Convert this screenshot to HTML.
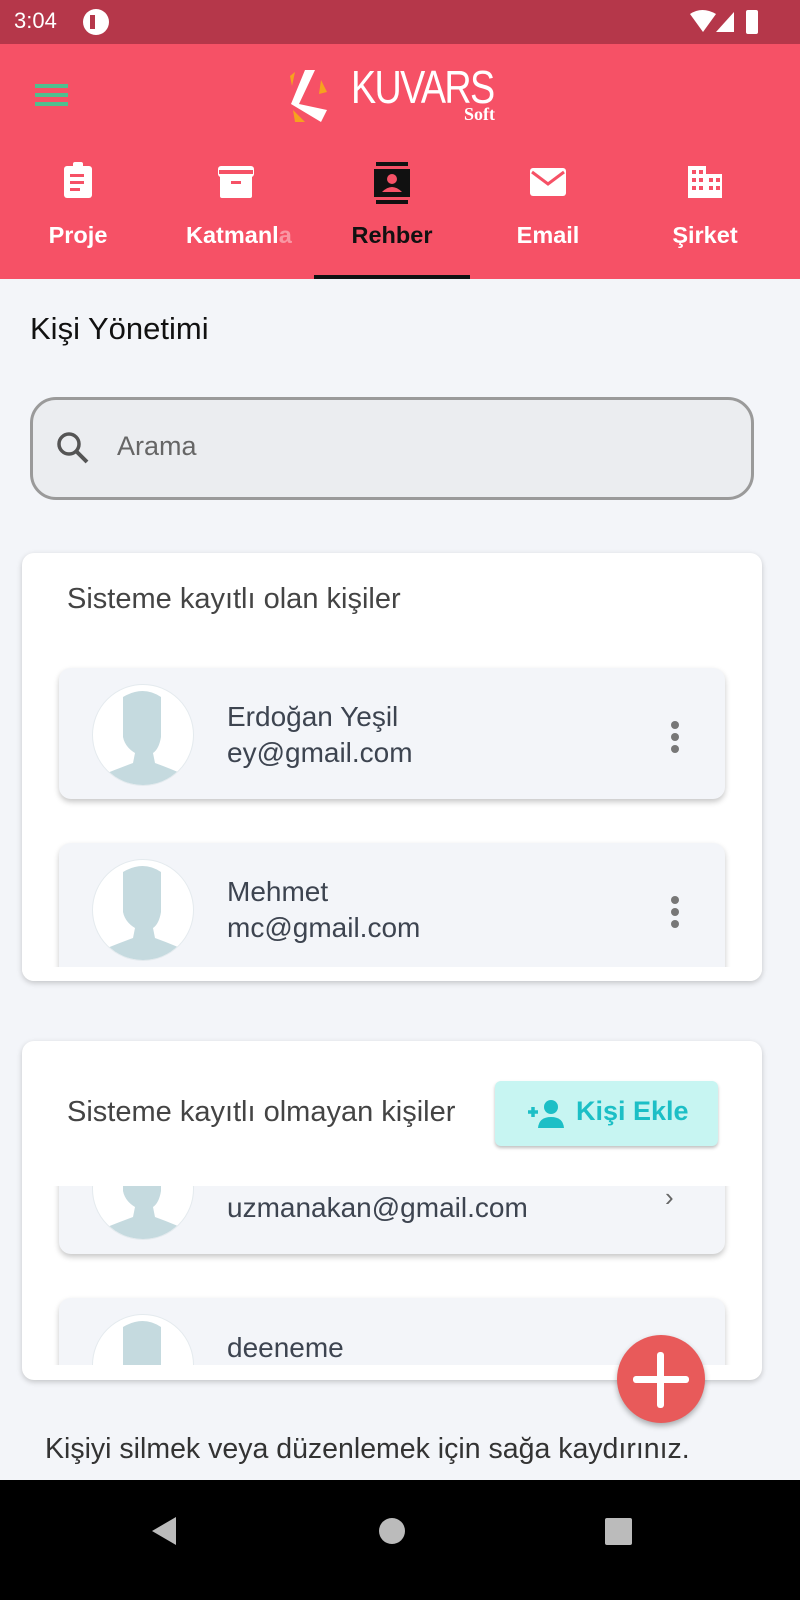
<!DOCTYPE html><html><head><meta charset="utf-8"><style>
*{margin:0;padding:0;box-sizing:border-box}
body{width:800px;height:1600px;background:#f3f5f9;font-family:"Liberation Sans",sans-serif;position:relative;overflow:hidden;color:#333}
.a{position:absolute;white-space:nowrap}
.tab{position:absolute;top:160px;width:156px;text-align:center;color:#fff;font-weight:bold;font-size:23.5px}
.tab svg{display:block;margin:0 auto 22px}
.card{position:absolute;left:22px;width:740px;background:#fff;border-radius:12px;box-shadow:0 2px 6px rgba(0,0,0,.2)}
.item{position:absolute;left:37px;width:666px;background:#f3f5f9;border-radius:12px;box-shadow:0 3px 6px rgba(0,0,0,.22)}
.av{position:absolute;left:33px;width:102px;height:102px;border-radius:50%;background:#fff;overflow:hidden;border:1px solid #e4eaee}
.nm{position:absolute;left:168px;font-size:28px;color:#3d4450;white-space:nowrap}
.dots{position:absolute;left:612px;width:8px}
.dots i{display:block;width:8px;height:8px;border-radius:50%;background:#777;margin-bottom:4px}
</style></head><body>
<div class="a" style="left:0;top:0;width:800px;height:44px;background:#b5374a"></div>
<div class="a" style="left:14px;top:8px;color:#fff;font-size:22px">3:04</div>
<div class="a" style="left:83px;top:9px;width:26px;height:26px;border-radius:50%;background:#fff"></div>
<div class="a" style="left:90px;top:15px;width:5px;height:14px;background:#b5374a"></div>
<svg class="a" style="left:688px;top:8px" width="100" height="28"><path d="M2 6 Q14 -2 28 6 L15 24Z" fill="#fff"/><path d="M46 4 L46 24 L28 24Z" fill="#fff"/><rect x="58" y="2" width="12" height="24" rx="2" fill="#fff"/></svg>
<div class="a" style="left:0;top:44px;width:800px;height:235px;background:#f65166"></div>
<div class="a" style="left:35px;top:84px;width:33px;height:4px;background:#4fbf8f;box-shadow:0 9px 0 #4fbf8f,0 18px 0 #4fbf8f"></div>
<svg class="a" style="left:285px;top:64px" width="60" height="60"><path d="M5 12 L10 8 L7 22Z" fill="#f6a21e"/><path d="M20 6 L30 6 L14 40 L42 46 L36 58 L6 40Z" fill="#fff"/><path d="M8 46 L20 58 L10 58Z" fill="#f6a21e"/><path d="M36 16 L42 28 L34 30Z" fill="#f6a21e"/></svg>
<div class="a" style="left:351px;top:60px;color:#fff;font-size:46px;letter-spacing:-2px;transform:scaleX(.82);transform-origin:left top">KUVARS</div>
<div class="a" style="left:464px;top:104px;color:#fff;font-size:18px;font-weight:bold;font-family:'Liberation Serif',serif">Soft</div>
<div class="tab" style="left:0"><svg width="34" height="40"><rect x="3" y="6" width="28" height="32" rx="3" fill="#fff"/><rect x="12" y="2" width="10" height="7" rx="2" fill="#fff"/><rect x="9" y="14" width="14" height="3" fill="#f65166"/><rect x="9" y="21" width="14" height="3" fill="#f65166"/><rect x="9" y="28" width="10" height="3" fill="#f65166"/></svg>Proje</div>
<div class="tab" style="overflow:hidden;width:130px;left:170px;text-align:left;padding-left:16px"><svg width="40" height="40" style="margin:0 0 22px 30px"><rect x="2" y="6" width="36" height="11" rx="3" fill="#fff"/><rect x="4" y="14" width="32" height="24" rx="2" fill="#fff"/><rect x="3" y="10" width="34" height="4" fill="#f65166"/><rect x="15" y="21" width="10" height="3" fill="#f65166"/></svg>Katmanl<span style="opacity:.4">a</span></div>
<div class="tab" style="left:314px;color:#111"><svg width="40" height="46" style="margin-bottom:16px"><rect x="4" y="2" width="32" height="4" fill="#111"/><rect x="4" y="40" width="32" height="4" fill="#111"/><rect x="2" y="9" width="36" height="28" fill="#111"/><circle cx="20" cy="19" r="5" fill="#f65166"/><path d="M10 32 Q20 22 30 32Z" fill="#f65166"/></svg>Rehber</div>
<div class="tab" style="left:470px"><svg width="40" height="40"><rect x="2" y="8" width="36" height="28" rx="3" fill="#fff"/><path d="M4 12 L20 24 L36 12" stroke="#f65166" stroke-width="3" fill="none"/></svg>Email</div>
<div class="tab" style="left:627px"><svg width="40" height="40"><path d="M3 6 H21 V14 H37 V38 H3Z" fill="#fff"/><g fill="#f65166"><rect x="7" y="10" width="4" height="4"/><rect x="14" y="10" width="4" height="4"/><rect x="7" y="18" width="4" height="4"/><rect x="14" y="18" width="4" height="4"/><rect x="7" y="26" width="4" height="4"/><rect x="14" y="26" width="4" height="4"/><rect x="24" y="18" width="4" height="4"/><rect x="31" y="18" width="4" height="4"/><rect x="24" y="26" width="4" height="4"/><rect x="31" y="26" width="4" height="4"/></g></svg>Şirket</div>
<div class="a" style="left:314px;top:275px;width:156px;height:4px;background:#111"></div>
<div class="a" style="left:30px;top:311px;font-size:31px;color:#111">Kişi Yönetimi</div>
<div class="a" style="left:30px;top:397px;width:724px;height:103px;border:3px solid #9a9a9a;border-radius:26px;background:#ebedf0"></div>
<svg class="a" style="left:55px;top:430px" width="36" height="36"><circle cx="14" cy="14" r="10" stroke="#555" stroke-width="3.5" fill="none"/><path d="M21 21 L32 32" stroke="#555" stroke-width="4"/></svg>
<div class="a" style="left:117px;top:431px;font-size:27px;color:#666">Arama</div>
<div class="card" style="top:553px;height:428px;overflow:hidden">
<div class="a" style="left:45px;top:30px;font-size:29px;color:#444">Sisteme kayıtlı olan kişiler</div>
<div class="item" style="top:115px;height:131px"><div class="av" style="top:16px"><svg width="102" height="102"><path d="M30 12 Q50 0 68 12 L68 52 Q66 64 60 68 L62 78 Q84 86 100 94 L100 102 L0 102 L0 94 Q18 86 40 78 L42 68 Q32 62 30 52Z" fill="#c5dadf"/></svg></div><div class="nm" style="top:33px">Erdoğan Yeşil</div><div class="nm" style="top:69px">ey@gmail.com</div><div class="dots" style="top:53px"><i></i><i></i><i></i></div></div>
<div class="item" style="top:290px;height:140px"><div class="av" style="top:16px"><svg width="102" height="102"><path d="M30 12 Q50 0 68 12 L68 52 Q66 64 60 68 L62 78 Q84 86 100 94 L100 102 L0 102 L0 94 Q18 86 40 78 L42 68 Q32 62 30 52Z" fill="#c5dadf"/></svg></div><div class="nm" style="top:33px">Mehmet</div><div class="nm" style="top:69px">mc@gmail.com</div><div class="dots" style="top:53px"><i></i><i></i><i></i></div></div>
<div class="a" style="left:0;top:414px;width:740px;height:14px;background:#fff"></div>
</div>
<div class="card" style="top:1041px;height:339px;overflow:hidden">
<div class="a" style="left:0;top:145px;width:740px;height:179px;overflow:hidden">
<div class="item" style="top:-100px;height:168px"><div class="av" style="top:52px"><svg width="102" height="102"><path d="M30 12 Q50 0 68 12 L68 52 Q66 64 60 68 L62 78 Q84 86 100 94 L100 102 L0 102 L0 94 Q18 86 40 78 L42 68 Q32 62 30 52Z" fill="#c5dadf"/></svg></div><div class="nm" style="top:106px">uzmanakan@gmail.com</div><div class="a" style="left:606px;top:96px;font-size:26px;color:#666">›</div></div>
<div class="item" style="top:112px;height:140px"><div class="av" style="top:16px"><svg width="102" height="102"><path d="M30 12 Q50 0 68 12 L68 52 Q66 64 60 68 L62 78 Q84 86 100 94 L100 102 L0 102 L0 94 Q18 86 40 78 L42 68 Q32 62 30 52Z" fill="#c5dadf"/></svg></div><div class="nm" style="top:34px">deeneme</div></div>
</div>
<div class="a" style="left:45px;top:55px;font-size:29px;color:#444">Sisteme kayıtlı olmayan kişiler</div>
<div class="a" style="left:473px;top:40px;width:223px;height:65px;background:#c7f5f2;border-radius:6px;box-shadow:0 2px 3px rgba(0,0,0,.25)"></div>
<svg class="a" style="left:503px;top:57px" width="44" height="32"><path d="M3 14 H13 M8 9 V19" stroke="#1cbfc6" stroke-width="3.5"/><circle cx="26" cy="9" r="7" fill="#1cbfc6"/><path d="M13 30 Q14 19 26 19 Q38 19 39 30Z" fill="#1cbfc6"/></svg>
<div class="a" style="left:554px;top:55px;font-size:27px;font-weight:bold;color:#1cbfc6">Kişi Ekle</div>
</div>
<div class="a" style="left:617px;top:1335px;width:88px;height:88px;border-radius:50%;background:#e85a5a;box-shadow:0 3px 6px rgba(0,0,0,.3)"></div>
<div class="a" style="left:633px;top:1376px;width:56px;height:7px;background:#fff;border-radius:3px"></div>
<div class="a" style="left:657px;top:1352px;width:7px;height:56px;background:#fff;border-radius:3px"></div>
<div class="a" style="left:45px;top:1433px;font-size:28.5px;color:#333">Kişiyi silmek veya düzenlemek için sağa kaydırınız.</div>
<div class="a" style="left:0;top:1480px;width:800px;height:120px;background:#000"></div>
<svg class="a" style="left:140px;top:1515px" width="520" height="32"><path d="M36 2 L12 16 L36 30Z" fill="#bbb"/><circle cx="252" cy="16" r="13" fill="#bbb"/><rect x="465" y="3" width="27" height="27" rx="2" fill="#bbb"/></svg>
</body></html>
